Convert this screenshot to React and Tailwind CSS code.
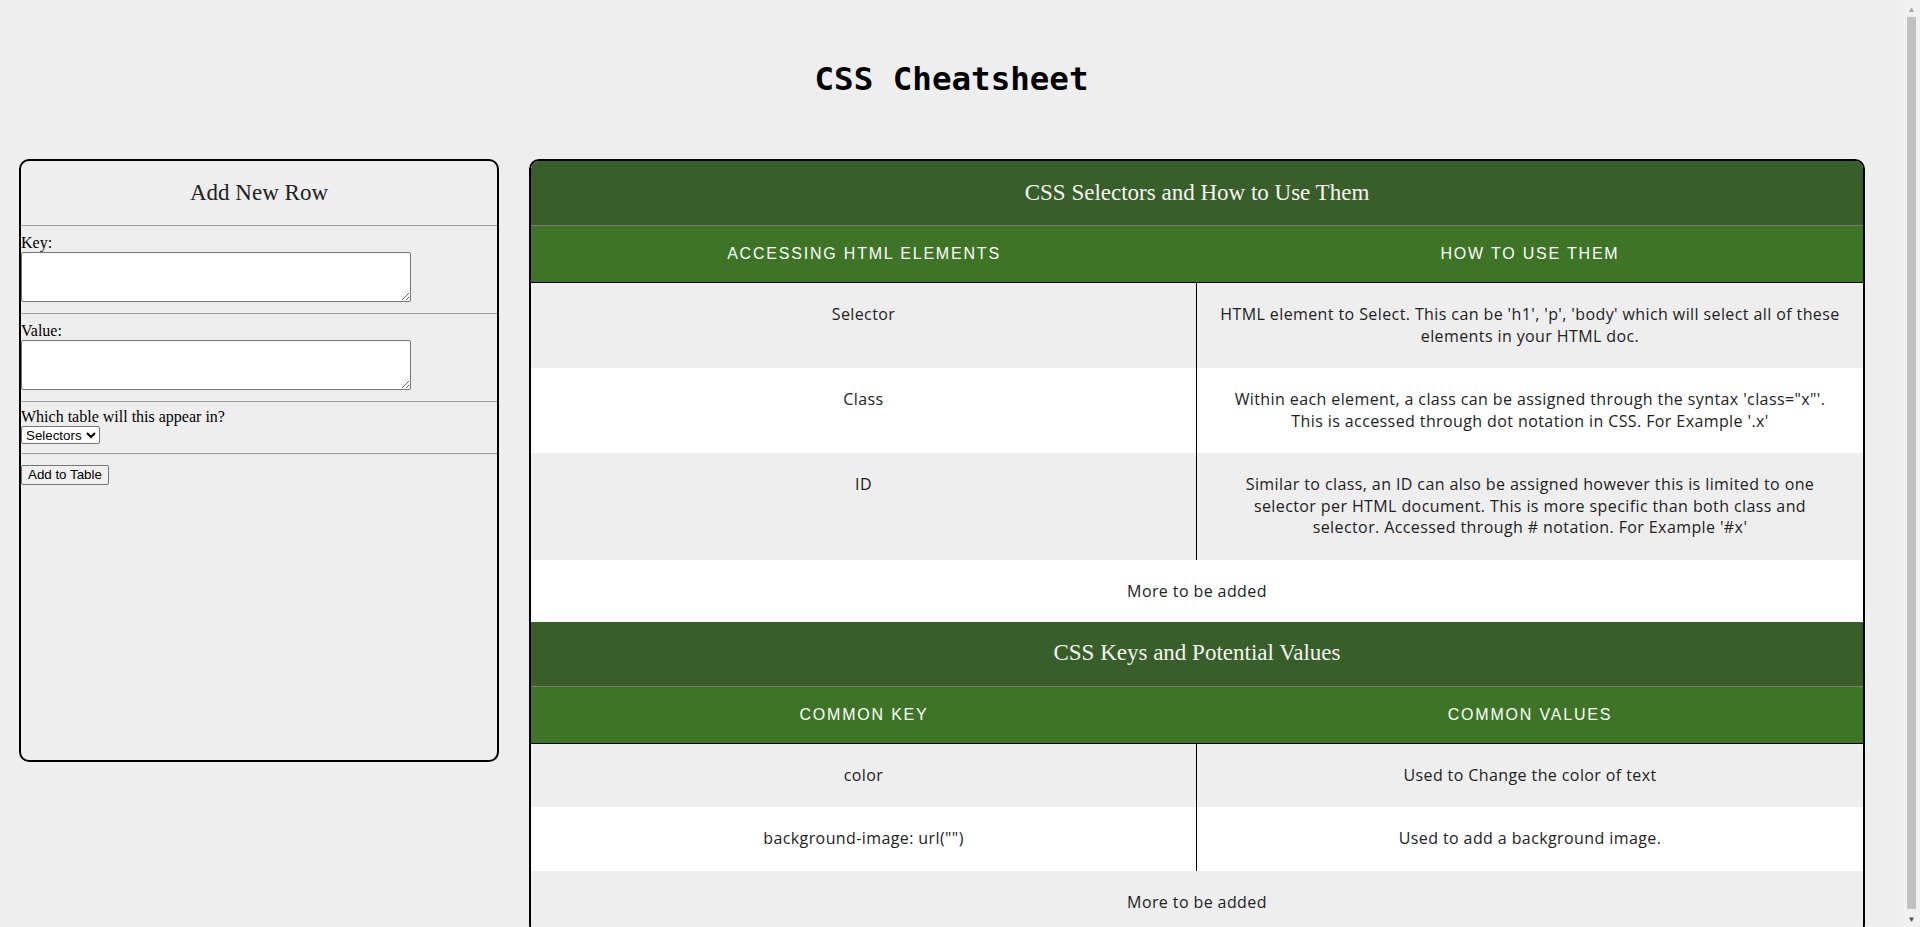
import React from 'react';

const selectorRows = [
    {
        key: 'Selector',
        value: [
            "HTML element to Select. This can be 'h1', 'p', 'body' which will select all of these",
            'elements in your HTML doc.',
        ],
    },
    {
        key: 'Class',
        value: [
            `Within each element, a class can be assigned through the syntax 'class="x"'.`,
            "This is accessed through dot notation in CSS. For Example '.x'",
        ],
    },
    {
        key: 'ID',
        value: [
            'Similar to class, an ID can also be assigned however this is limited to one',
            'selector per HTML document. This is more specific than both class and',
            "selector. Accessed through # notation. For Example '#x'",
        ],
    },
];

const keyRows = [
    { key: 'color', value: ['Used to Change the color of text'] },
    { key: 'background-image: url("")', value: ['Used to add a background image.'] },
];

function Section({ title, headers, rows }) {
    return (
        <div>
            <div className="h-[65px] flex items-center justify-center bg-[#385e2a] border-b border-[#7d7d7d] font-['Liberation_Serif',serif] text-[23px] tracking-normal text-[#f5f5f0]">
                {title}
            </div>
            <div className="h-[57px] grid grid-cols-2 items-center bg-[#3d7425] border-b border-black font-['Liberation_Sans',sans-serif] text-[16px] tracking-[1.8px] uppercase text-white text-center">
                <div>{headers[0]}</div>
                <div>{headers[1]}</div>
            </div>
            {rows.map((row, i) => (
                <div
                    key={row.key}
                    className={`grid grid-cols-2 ${i % 2 === 0 ? 'bg-[#eeeeee]' : 'bg-white'}`}
                >
                    <div className="border-r border-black py-[21px] px-5 text-center leading-[21.5px]">
                        {row.key}
                    </div>
                    <div className="py-[21px] px-2 text-center leading-[21.5px] whitespace-nowrap">
                        {row.value.map((line, j) => (
                            <div key={j}>{line}</div>
                        ))}
                    </div>
                </div>
            ))}
            <div
                className={`py-[20px] text-center leading-[22px] ${rows.length % 2 === 0 ? 'bg-[#eeeeee]' : 'bg-white'}`}
            >
                More to be added
            </div>
        </div>
    );
}

// browser scrollbar, as in the screenshot
function Scrollbar() {
    return (
        <div className="fixed top-0 right-0 w-[17px] h-screen bg-[#f1f1f1] flex flex-col items-center">
            <div className="h-[17px] flex items-center justify-center text-[8px] leading-none text-[#a3a3a3]">▲</div>
            <div className="w-[9px] flex-1 bg-[#c1c1c1] mb-[1px]" />
            <div className="h-[17px] flex items-center justify-center text-[8px] leading-none text-[#505050]">▼</div>
        </div>
    );
}

export default function App() {
    return (
        <div className="min-h-screen bg-[#eeeeee]">
            <div className="w-[1903px] pb-[20px]">
                <div className="h-[159px] flex items-center justify-center">
                    <h1 className="font-['DejaVu_Sans_Mono',monospace] font-bold text-[32.5px] text-black">
                        CSS Cheatsheet
                    </h1>
                </div>

                <div className="flex items-start gap-[30px] ml-[19px]">
                    <div className="w-[480px] h-[603px] shrink-0 border-2 border-black rounded-[10px] font-['Liberation_Serif',serif] text-[16px] text-black">
                        <div className="h-[65px] flex items-center justify-center border-b border-[#9a9a9a] text-[23px] text-[#222]">
                            Add New Row
                        </div>

                        <div className="pt-[7px] pb-[11px] border-b border-[#9a9a9a]">
                            <label className="block leading-[19px]">Key:</label>
                            <textarea className="block w-[390px] h-[50px] bg-white border border-[#767676] rounded-[2px]" />
                        </div>

                        <div className="pt-[7px] pb-[11px] border-b border-[#9a9a9a]">
                            <label className="block leading-[19px]">Value:</label>
                            <textarea className="block w-[390px] h-[50px] bg-white border border-[#767676] rounded-[2px]" />
                        </div>

                        <div className="pt-[5px] pb-[9px] border-b border-[#9a9a9a]">
                            <label className="block leading-[19px]">Which table will this appear in?</label>
                            <select className="block w-[79px] h-[18px] bg-white border border-[#767676] rounded-[2px] font-['Liberation_Sans',sans-serif] text-[13.33px]">
                                <option>Selectors</option>
                                <option>Keys</option>
                            </select>
                        </div>

                        <div className="pt-[8px]">
                            <button
                                type="button"
                                className="h-[20px] px-[6px] bg-[#efefef] border border-[#767676] rounded-[2px] font-['Liberation_Sans',sans-serif] text-[13.33px] leading-[16px]"
                            >
                                Add to Table
                            </button>
                        </div>
                    </div>

                    <div className="w-[1336px] shrink-0 border-2 border-black rounded-[10px] overflow-hidden font-['Open_Sans',sans-serif] text-[16px] tracking-[0.4px] text-[#222]">
                        <Section
                            title="CSS Selectors and How to Use Them"
                            headers={['Accessing HTML Elements', 'How to Use Them']}
                            rows={selectorRows}
                        />
                        <Section
                            title="CSS Keys and Potential Values"
                            headers={['Common Key', 'Common Values']}
                            rows={keyRows}
                        />
                    </div>
                </div>
            </div>
            <Scrollbar />
        </div>
    );
}
